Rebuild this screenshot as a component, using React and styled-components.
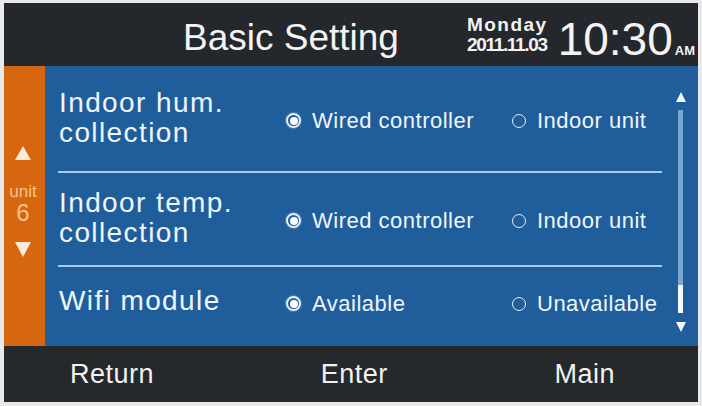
import React from 'react';
import styled, { createGlobalStyle } from 'styled-components';

const Global = createGlobalStyle`
  html, body { margin: 0; padding: 0; background: #e9e9e9; }
  body { font-family: "Liberation Sans", Arial, sans-serif; }
  * { box-sizing: border-box; }
`;

const Screen = styled.div`
  width: 694px;
  height: 399px;
  margin: 3px 4px 4px 4px;
  display: flex;
  flex-direction: column;
  background: #25282c;
  overflow: hidden;
`;

const Header = styled.header`
  height: 63px;
  flex: none;
  display: flex;
  align-items: flex-start;
  background: #24272b;
  color: #f3f3f3;
  padding-right: 3px;
`;

const Title = styled.h1`
  margin: 14px 0 0 179px;
  font-size: 37px;
  font-weight: 400;
  line-height: 42px;
`;

const DateCol = styled.div`
  margin: 12px 0 0 auto;
  display: flex;
  flex-direction: column;
  align-items: flex-start;
`;

const Day = styled.span`
  font-size: 19px;
  font-weight: 700;
  line-height: 20px;
  letter-spacing: 1.5px;
`;

const DateText = styled.span`
  font-size: 19px;
  font-weight: 700;
  line-height: 20px;
  letter-spacing: -1.3px;
`;

const Clock = styled.div`
  margin: 13px 0 0 10px;
  display: flex;
  align-items: baseline;
`;

const Time = styled.span`
  font-size: 46px;
  line-height: 46px;
`;

const Meridiem = styled.span`
  font-size: 13px;
  font-weight: 700;
  margin-left: 2px;
`;

const Main = styled.div`
  flex: 1;
  min-height: 0;
  display: flex;
  background: #1f5e9b;
`;

const Side = styled.aside`
  width: 41px;
  flex: none;
  background: #d6660f;
  display: flex;
  flex-direction: column;
  align-items: center;
  padding: 80px 3px 0 0;
`;

const Tri = styled.span`
  width: 0;
  height: 0;
  border-left: 8px solid transparent;
  border-right: 8px solid transparent;
  ${p => (p.$down
    ? `border-top: 15px solid ${p.$color};`
    : `border-bottom: 14px solid ${p.$color};`)}
  margin-top: ${p => p.$mt || 0}px;
`;

const UnitLabel = styled.span`
  margin-top: 22px;
  font-size: 17px;
  line-height: 19px;
  color: #f8c28c;
`;

const UnitNum = styled.span`
  font-size: 24px;
  line-height: 24px;
  color: #f8c28c;
`;

const List = styled.div`
  flex: 1;
  min-width: 0;
  display: flex;
  flex-direction: column;
  padding: 0 6px 0 13px;
`;

const Row = styled.div`
  height: ${p => p.$h}px;
  flex: none;
  display: grid;
  grid-template-columns: 227px 226px 1fr;
  align-items: center;
  padding: 0 0 ${p => p.$pb}px 1px;
  border-bottom: ${p => (p.$last ? 'none' : '2px solid #a7cceb')};
`;

const Label = styled.div`
  font-size: 28px;
  line-height: 30px;
  letter-spacing: 1.4px;
  color: #eef5fb;
`;

const Option = styled.div`
  display: flex;
  align-items: center;
  gap: 11px;
  margin-top: 6px;
  font-size: 22px;
  line-height: 25px;
  letter-spacing: 0.5px;
  color: #eef5fb;
`;

const Radio = styled.span`
  width: ${p => (p.$on ? 15 : 14)}px;
  height: ${p => (p.$on ? 15 : 14)}px;
  flex: none;
  border-radius: 50%;
  border: ${p => (p.$on ? '2px solid #e8f0f8' : '1.6px solid #e8f0f8')};
  display: flex;
  align-items: center;
  justify-content: center;
  box-shadow: ${p => (p.$on ? '0 0 2px rgba(255,255,255,0.7)' : 'none')};
  &::after {
    content: '';
    width: 8px;
    height: 8px;
    border-radius: 50%;
    background: ${p => (p.$on ? '#ffffff' : 'transparent')};
  }
`;

const ScrollCol = styled.div`
  width: 30px;
  flex: none;
  display: flex;
  flex-direction: column;
  align-items: center;
  padding: 26px 5px 0 0;
`;

const ScrollArrow = styled.span`
  width: 0;
  height: 0;
  border-left: 5.5px solid transparent;
  border-right: 5.5px solid transparent;
  ${p => (p.$down
    ? 'border-top: 10px solid #f4f8fc;'
    : 'border-bottom: 10px solid #f4f8fc;')}
`;

const Track = styled.div`
  width: 5px;
  height: 203px;
  margin: ${p => p.$m};
  background: #7aa7d2;
  display: flex;
  flex-direction: column;
  justify-content: flex-end;
`;

const Thumb = styled.div`
  height: 28px;
  background: #f6f9fd;
`;

const Footer = styled.footer`
  height: 56px;
  flex: none;
  display: flex;
  align-items: center;
  justify-content: space-between;
  padding: 0 83px 0 66px;
  background: #26292c;
  color: #f1f1f1;
  font-size: 27px;
  letter-spacing: 0.5px;
`;

const FootItem = styled.span``;

const rows = [
  { label: ['Indoor hum.', 'collection'], opts: ['Wired controller', 'Indoor unit'], h: 107, pb: 2 },
  { label: ['Indoor temp.', 'collection'], opts: ['Wired controller', 'Indoor unit'], h: 94, pb: 3 },
  { label: ['Wifi module'], opts: ['Available', 'Unavailable'], h: 79, pb: 12, last: true },
];

export default function App() {
  return (
    <>
      <Global />
      <Screen>
        <Header>
          <Title>Basic Setting</Title>
          <DateCol>
            <Day>Monday</Day>
            <DateText>2011.11.03</DateText>
          </DateCol>
          <Clock>
            <Time>10:30</Time>
            <Meridiem>AM</Meridiem>
          </Clock>
        </Header>
        <Main>
          <Side>
            <Tri $color="#fcebd9" />
            <UnitLabel>unit</UnitLabel>
            <UnitNum>6</UnitNum>
            <Tri $down $color="#fcebd9" $mt={17} />
          </Side>
          <List>
            {rows.map((r, i) => (
              <Row key={i} $h={r.h} $pb={r.pb} $last={r.last}>
                <Label>
                  {r.label.map((l, j) => (
                    <div key={j}>{l}</div>
                  ))}
                </Label>
                <Option>
                  <Radio $on />
                  {r.opts[0]}
                </Option>
                <Option>
                  <Radio />
                  {r.opts[1]}
                </Option>
              </Row>
            ))}
          </List>
          <ScrollCol>
            <ScrollArrow />
            <Track $m="8px 0 9px 0">
              <Thumb />
            </Track>
            <ScrollArrow $down />
          </ScrollCol>
        </Main>
        <Footer>
          <FootItem>Return</FootItem>
          <FootItem>Enter</FootItem>
          <FootItem>Main</FootItem>
        </Footer>
      </Screen>
    </>
  );
}
